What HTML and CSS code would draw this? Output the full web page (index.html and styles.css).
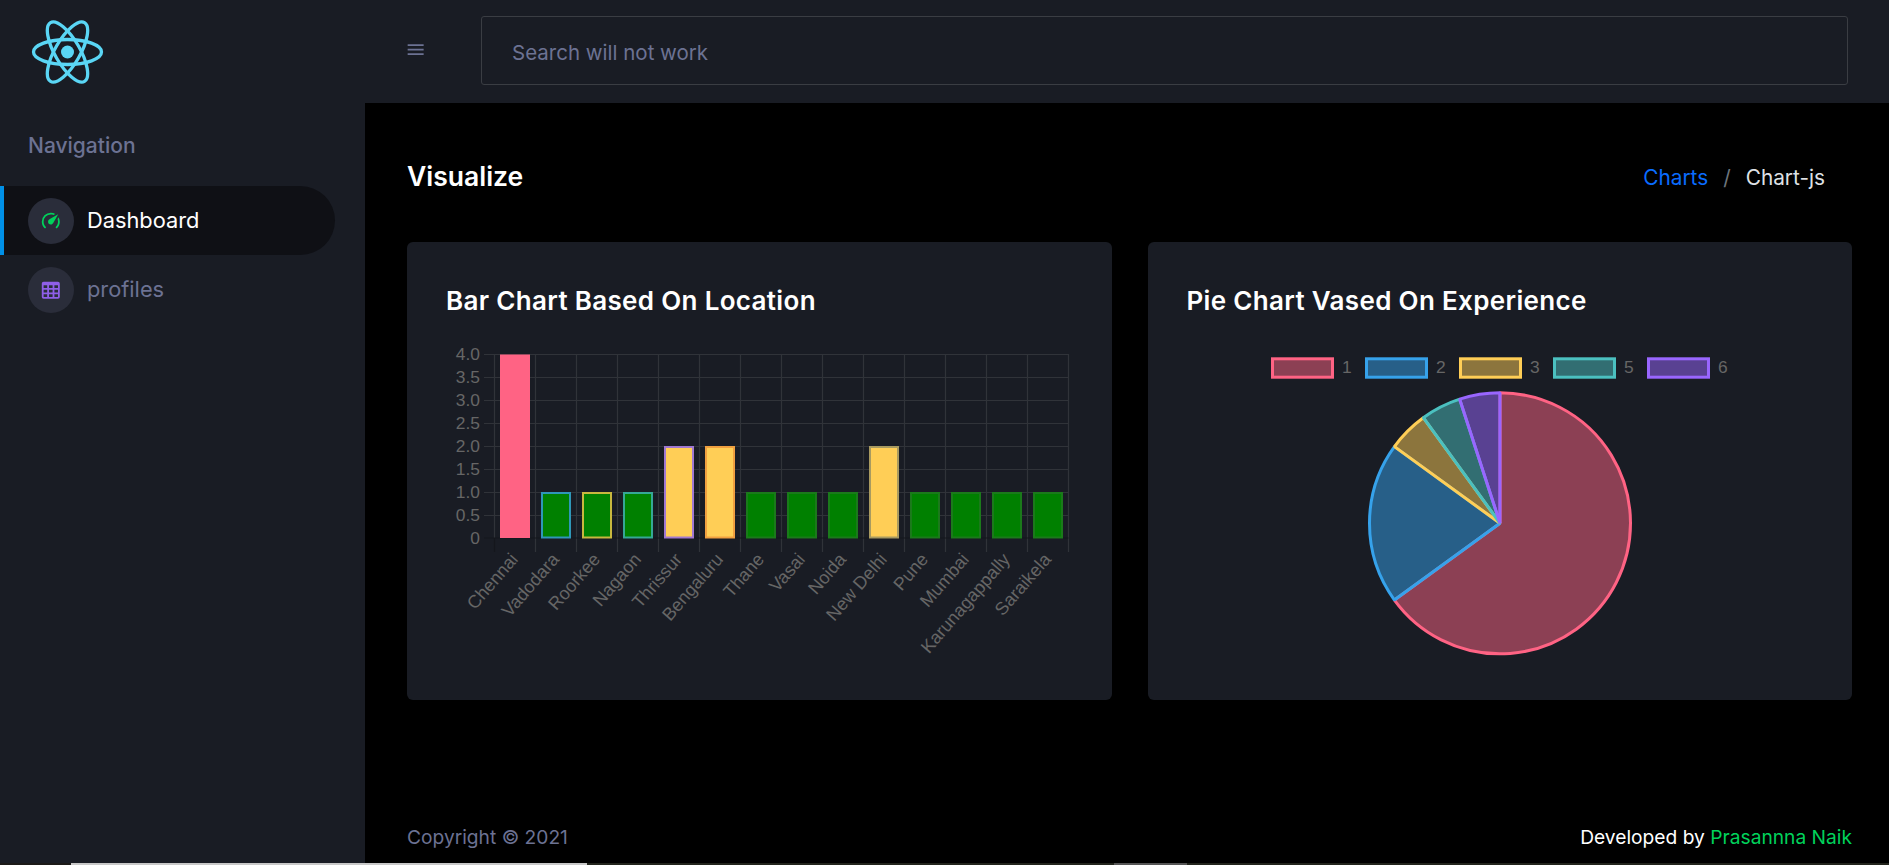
FILE: index.html
```html
<!DOCTYPE html>
<html lang="en">
<head>
<meta charset="utf-8">
<title>Visualize</title>
<link rel="stylesheet" href="styles.css">
</head>
<body>
<div class="app">
  <aside class="sidebar">
    <div class="brand">
      <svg class="logo" viewBox="0 0 72 66" aria-label="React logo">
        <g fill="none" stroke="#5ad6f5" stroke-width="3.3">
          <ellipse cx="36" cy="33" rx="34" ry="12.5"/>
          <ellipse cx="36" cy="33" rx="34" ry="12.5" transform="rotate(60 36 33)"/>
          <ellipse cx="36" cy="33" rx="34" ry="12.5" transform="rotate(120 36 33)"/>
        </g>
        <circle cx="36" cy="33" r="6.5" fill="#5ad6f5"/>
      </svg>
    </div>
    <div class="nav-title">Navigation</div>
    <nav class="nav">
      <a class="nav-item active">
        <span class="nav-icon"><svg class="icon-green" viewBox="0 0 24 24"><path d="M12,16A3,3 0 0,1 9,13C9,11.88 9.61,10.9 10.5,10.39L20.21,4.77L14.68,14.35C14.18,15.33 13.17,16 12,16M12,3C13.81,3 15.5,3.5 16.97,4.32L14.87,5.53C14,5.19 13,5 12,5A8,8 0 0,0 4,13C4,15.21 4.89,17.21 6.34,18.65H6.35C6.74,19.04 6.74,19.67 6.35,20.06C5.96,20.45 5.32,20.45 4.93,20.07V20.07C3.12,18.26 2,15.76 2,13A10,10 0 0,1 12,3M22,13C22,15.76 20.88,18.26 19.07,20.07V20.07C18.68,20.45 18.05,20.45 17.66,20.06C17.27,19.67 17.27,19.04 17.66,18.65V18.65C19.11,17.2 20,15.21 20,13C20,12 19.81,11 19.47,10.1L20.68,8C21.5,9.5 22,11.18 22,13Z"/></svg></span>
        <span class="nav-label">Dashboard</span>
      </a>
      <a class="nav-item">
        <span class="nav-icon"><svg class="icon-purple" viewBox="0 0 24 24"><path d="M4,3H20A2,2 0 0,1 22,5V20A2,2 0 0,1 20,22H4A2,2 0 0,1 2,20V5A2,2 0 0,1 4,3M4,7V10H8V7H4M10,7V10H14V7H10M20,10V7H16V10H20M4,12V15H8V12H4M4,20H8V17H4V20M10,12V15H14V12H10M10,20H14V17H10V20M20,20V17H16V20H20M20,12H16V15H20V12Z"/></svg></span>
        <span class="nav-label">profiles</span>
      </a>
    </nav>
  </aside>
  <div class="column">
    <header class="topbar">
      <svg class="menu" viewBox="0 0 24 24"><path d="M3,6H21V8H3V6M3,11H21V13H3V11M3,16H21V18H3V16Z"/></svg>
      <div class="search">Search will not work</div>
    </header>
    <main class="content">
      <div class="page-header">
        <h1 class="page-title">Visualize</h1>
        <div class="breadcrumb">
          <a class="crumb-link">Charts</a>
          <span class="crumb-sep">/</span>
          <span class="crumb-current">Chart-js</span>
        </div>
      </div>
      <div class="cards">
        <section class="card">
          <h2 class="card-title">Bar Chart Based On Location</h2>
          <svg class="chart" viewBox="446 340 626 321">
            <path class="grid" d="M484 354.5H1068.5M484 377.5H1068.5M484 400.5H1068.5M484 423.5H1068.5M484 446.5H1068.5M484 469.5H1068.5M484 492.5H1068.5M484 515.5H1068.5M494.5 354V538M535.5 354V552M576.5 354V552M617.5 354V552M658.5 354V552M699.5 354V552M740.5 354V552M781.5 354V552M822.5 354V552M863.5 354V552M904.5 354V552M945.5 354V552M986.5 354V552M1027.5 354V552M1068.5 354V552"/>
            <path class="grid-zero" d="M484 538H1068.5M494.5 538V552"/>
            <g class="tick-y">
              <text x="480" y="360">4.0</text>
              <text x="480" y="383">3.5</text>
              <text x="480" y="406">3.0</text>
              <text x="480" y="429">2.5</text>
              <text x="480" y="452">2.0</text>
              <text x="480" y="475">1.5</text>
              <text x="480" y="498">1.0</text>
              <text x="480" y="521">0.5</text>
              <text x="480" y="544">0</text>
            </g>
            <g stroke-width="2">
              <rect x="500" y="354.5" width="30" height="183.5" fill="#ff6384"/>
              <rect x="542" y="493" width="28" height="44.5" fill="#008000" stroke="#2f97b8"/>
              <rect x="583" y="493" width="28" height="44.5" fill="#008000" stroke="#c8b83e"/>
              <rect x="624" y="493" width="28" height="44.5" fill="#008000" stroke="#35a896"/>
              <rect x="665" y="447" width="28" height="90.5" fill="#ffce56" stroke="#a178d0"/>
              <rect x="706" y="447" width="28" height="90.5" fill="#ffce56" stroke="#f0a040"/>
              <rect x="747" y="493" width="28" height="44.5" fill="#008000" stroke="#1b7a1b"/>
              <rect x="788" y="493" width="28" height="44.5" fill="#008000" stroke="#1b7a1b"/>
              <rect x="829" y="493" width="28" height="44.5" fill="#008000" stroke="#1b7a1b"/>
              <rect x="870" y="447" width="28" height="90.5" fill="#ffce56" stroke="#a89a60"/>
              <rect x="911" y="493" width="28" height="44.5" fill="#008000" stroke="#1b7a1b"/>
              <rect x="952" y="493" width="28" height="44.5" fill="#008000" stroke="#1b7a1b"/>
              <rect x="993" y="493" width="28" height="44.5" fill="#008000" stroke="#1b7a1b"/>
              <rect x="1034" y="493" width="28" height="44.5" fill="#008000" stroke="#1b7a1b"/>
            </g>
            <g class="tick-x">
              <text transform="translate(519 560) rotate(-49)">Chennai</text>
              <text transform="translate(560 560) rotate(-49)">Vadodara</text>
              <text transform="translate(601 560) rotate(-49)">Roorkee</text>
              <text transform="translate(642 560) rotate(-49)">Nagaon</text>
              <text transform="translate(683 560) rotate(-49)">Thrissur</text>
              <text transform="translate(724 560) rotate(-49)">Bengaluru</text>
              <text transform="translate(765 560) rotate(-49)">Thane</text>
              <text transform="translate(806 560) rotate(-49)">Vasai</text>
              <text transform="translate(847 560) rotate(-49)">Noida</text>
              <text transform="translate(888 560) rotate(-49)">New Delhi</text>
              <text transform="translate(929 560) rotate(-49)">Pune</text>
              <text transform="translate(970 560) rotate(-49)">Mumbai</text>
              <text transform="translate(1011 560) rotate(-49)">Karunagappally</text>
              <text transform="translate(1052 560) rotate(-49)">Saraikela</text>
            </g>
          </svg>
        </section>
        <section class="card">
          <h2 class="card-title">Pie Chart Vased On Experience</h2>
          <svg class="chart" viewBox="1187 340 626 321">
            <g stroke-width="3" fill-opacity="0.5">
              <rect x="1272.5" y="358.8" width="60" height="18.4" fill="#ff6384" stroke="#ff6384"/>
              <rect x="1366.5" y="358.8" width="60" height="18.4" fill="#36a2eb" stroke="#36a2eb"/>
              <rect x="1460.5" y="358.8" width="60" height="18.4" fill="#ffce56" stroke="#ffce56"/>
              <rect x="1554.5" y="358.8" width="60" height="18.4" fill="#4bc0c0" stroke="#4bc0c0"/>
              <rect x="1648.5" y="358.8" width="60" height="18.4" fill="#9966ff" stroke="#9966ff"/>
            </g>
            <g class="legend-text">
              <text x="1342" y="373">1</text>
              <text x="1436" y="373">2</text>
              <text x="1530" y="373">3</text>
              <text x="1624" y="373">5</text>
              <text x="1718" y="373">6</text>
            </g>
            <g stroke-width="3" fill-opacity="0.5" stroke-linejoin="bevel">
              <path d="M1500 523.3L1500 392.8A130.5 130.5 0 1 1 1394.42 600.01Z" fill="#ff6384" stroke="#ff6384"/>
              <path d="M1500 523.3L1394.42 600.01A130.5 130.5 0 0 1 1394.42 446.59Z" fill="#36a2eb" stroke="#36a2eb"/>
              <path d="M1500 523.3L1394.42 446.59A130.5 130.5 0 0 1 1423.29 417.72Z" fill="#ffce56" stroke="#ffce56"/>
              <path d="M1500 523.3L1423.29 417.72A130.5 130.5 0 0 1 1459.67 399.19Z" fill="#4bc0c0" stroke="#4bc0c0"/>
              <path d="M1500 523.3L1459.67 399.19A130.5 130.5 0 0 1 1500 392.8Z" fill="#9966ff" stroke="#9966ff"/>
            </g>
          </svg>
        </section>
      </div>
      <footer class="footer">
        <span class="copyright">Copyright © 2021</span>
        <span class="credit">Developed by <span class="credit-name">Prasannna Naik</span></span>
      </footer>
    </main>
  </div>
</div>
<div class="strip">
  <span class="seg seg-a"></span>
  <span class="seg seg-b"></span>
  <span class="seg seg-c"></span>
  <span class="seg seg-d"></span>
  <span class="seg seg-e"></span>
</div>
</body>
</html>
```

FILE: styles.css
```css
* { box-sizing: border-box; }
html, body { margin: 0; padding: 0; height: 100%; overflow: hidden; background: #000; }
body { font-family: Inter, "Noto Sans", sans-serif; color: #fff; }

.app { display: flex; height: 863px; }

.sidebar { width: 365px; flex: none; background: #191c24; }
.brand { height: 103px; display: flex; align-items: flex-start; padding: 18.5px 0 0 31px; }
.logo { width: 73px; height: 66px; display: block; }
.nav-title { padding-left: 28px; height: 83px; line-height: 85px; font-size: 21px; font-weight: 500; color: #6c7293; }
.nav { display: flex; flex-direction: column; }
.nav-item { display: flex; align-items: center; gap: 13px; height: 69px; width: 335px; padding-left: 28px; font-size: 21.8px; color: #6c7293; border-radius: 0 35px 35px 0; }
.nav-item.active { background: #0f1015; color: #fff; border-left: 4px solid #0090e7; padding-left: 24px; }
.nav-label { margin-top: -2px; }
.nav-icon { width: 46px; height: 46px; border-radius: 50%; background: #2a2d3a; display: flex; align-items: center; justify-content: center; flex: none; }
.nav-icon svg { width: 21.6px; height: 21.6px; display: block; }
.icon-green { fill: #00d25b; }
.icon-purple { fill: #8f5fe8; }

.column { flex: 1; min-width: 0; display: flex; flex-direction: column; }
.topbar { height: 103px; flex: none; background: #191c24; display: flex; align-items: center; padding: 0 41px 0 42px; gap: 57px; }
.menu { width: 21.3px; height: 21.3px; fill: #6c7293; flex: none; margin: -3px -2.6px 0 -1.7px; }
.search { flex: 1; height: 69px; margin-top: -2px; border: 1px solid #3a3d43; border-radius: 3px; display: flex; align-items: center; padding: 3px 0 0 30px; font-size: 20.5px; color: #6c7293; }

.content { flex: 1; display: flex; flex-direction: column; padding: 52px 37px 0 42px; background: #000; }
.page-header { display: flex; justify-content: space-between; align-items: center; height: 42px; }
.page-title { margin: 0; font-size: 26.5px; font-weight: 600; color: #fff; }
.breadcrumb { display: flex; align-items: center; gap: 15px; padding: 2px 27px 0 0; font-size: 20.8px; }
.crumb-link { color: #0a6cff; }
.crumb-sep { color: #6c757d; }
.crumb-current { color: #dfe1e5; }

.cards { display: grid; grid-template-columns: 1fr 1fr; gap: 36px; margin-top: 45px; }
.card { background: #191c24; border-radius: 6px; padding: 39px; height: 458px; }
.card-title { margin: 0 0 19px; height: 40px; line-height: 40px; font-size: 26px; font-weight: 600; letter-spacing: 0.33px; color: #fff; }
.chart { display: block; width: 626px; height: 321px; overflow: visible; }
.grid { fill: none; stroke: #303339; stroke-width: 1.2; }
.grid-zero { fill: none; stroke: #14161c; stroke-width: 1.2; }
.tick-y text { font: 17.4px "Liberation Sans", Arial, sans-serif; fill: #666; text-anchor: end; }
.tick-x text { font: 18px "Liberation Sans", Arial, sans-serif; fill: #666; text-anchor: end; }
.legend-text text { font: 17.4px "Liberation Sans", Arial, sans-serif; fill: #666; }

.footer { margin-top: auto; display: flex; justify-content: space-between; align-items: center; height: 50px; padding-bottom: 2px; font-size: 19.2px; }
.copyright { color: #6c7293; }
.credit { color: #fff; }
.credit-name { color: #00d25b; }

.strip { display: flex; height: 2px; background: #22241c; }
.seg { display: block; height: 2px; }
.seg-a { width: 71px; background: #1c1a18; }
.seg-b { width: 516px; background: #c8c8c8; }
.seg-c { width: 527px; background: #22241c; }
.seg-d { width: 73px; background: #555; }
.seg-e { flex: 1; background: #22241c; }
```
